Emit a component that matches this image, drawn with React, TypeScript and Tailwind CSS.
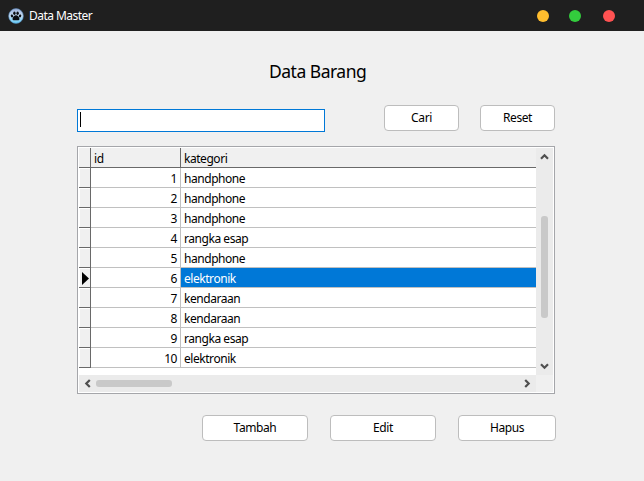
import React from "react";

const rows = [
  { id: 1, kategori: "handphone" },
  { id: 2, kategori: "handphone" },
  { id: 3, kategori: "handphone" },
  { id: 4, kategori: "rangka esap" },
  { id: 5, kategori: "handphone" },
  { id: 6, kategori: "elektronik" },
  { id: 7, kategori: "kendaraan" },
  { id: 8, kategori: "kendaraan" },
  { id: 9, kategori: "rangka esap" },
  { id: 10, kategori: "elektronik" },
];
const selectedId = 6;

function Button({ label, width }: { label: string; width: string }) {
  return (
    <button
      className={`${width} flex h-[26px] items-center justify-center rounded-[4px] border border-[#bdbdbd] bg-white text-[12px] leading-4 tracking-[-0.4px]`}
    >
      {label}
    </button>
  );
}

function Chevron({ rotate }: { rotate: string }) {
  return (
    <svg className={`${rotate} size-[9px] shrink-0`} viewBox="0 0 9 9" fill="none" stroke="#505050" strokeWidth="2.2">
      <path d="M1 6.800 4.500 3.300 8 6.800" />
    </svg>
  );
}

function PawLogo() {
  return (
    <svg className="size-4" viewBox="0 0 16 16">
      <defs>
        <linearGradient id="disc" x1="0" y1="0" x2="0" y2="1">
          <stop offset="0" stopColor="#9fb0d8" />
          <stop offset="0.5" stopColor="#c4dcf3" />
          <stop offset="1" stopColor="#62ccf8" />
        </linearGradient>
      </defs>
      <circle cx="8" cy="8" r="7.4" fill="url(#disc)" stroke="#4f7fae" strokeWidth="0.6" />
      <g fill="#0b0d12">
        <ellipse cx="4" cy="7.900" rx="1.2" ry="1.5" transform="rotate(-25 4 7.9)" />
        <ellipse cx="6.4" cy="5.2" rx="1.2" ry="1.7" />
        <ellipse cx="9.6" cy="5.2" rx="1.2" ry="1.7" />
        <ellipse cx="12" cy="7.9" rx="1.2" ry="1.5" transform="rotate(25 12 7.9)" />
        <path d="M8 7.300c1.700 0 3.500 2.200 3.500 3.600 0 1.600-2.200 1.400-3.500 1.400s-3.500.2-3.500-1.400C4.500 9.500 6.300 7.300 8 7.300z" />
      </g>
    </svg>
  );
}

function Grid() {
  return (
    <div className="mt-[14px] ml-[77px] flex h-[248px] w-[478px] flex-col border border-[#a5a6aa] bg-white p-px">
      <div className="flex h-[227px]">
        <div className="flex w-[457px] flex-col">
          <div className="flex h-5 border-b border-[#696969] bg-[#f0f0f0]">
            <div className="w-3 border-r border-[#696969]" />
            <div className="w-[90px] border-r border-[#696969] pl-[3px] leading-[21px]">id</div>
            <div className="flex-1 pl-[3px] leading-[21px]">kategori</div>
          </div>
          {rows.map((row) => (
            <div key={row.id} className="flex h-5">
              <div className="flex w-3 items-center border-r border-b border-[#696969] bg-[#f0f0f0] pt-px pl-[3px] shadow-[inset_1px_1px_0_#fff]">
                {row.id === selectedId && (
                  <svg className="h-[13px] w-[7px]" viewBox="0 0 7 13">
                    <path d="M0 0 7 6.500 0 13z" />
                  </svg>
                )}
              </div>
              <div className="w-[90px] border-r border-b border-[#c0c0c0] pr-[3px] text-right leading-[21px]">
                {row.id}
              </div>
              <div
                className={
                  row.id === selectedId
                    ? "flex-1 border-b border-[#c0c0c0] bg-[#0078d7] pl-[3px] leading-[21px] text-white"
                    : "flex-1 border-b border-[#c0c0c0] pl-[3px] leading-[21px]"
                }
              >
                {row.kategori}
              </div>
            </div>
          ))}
        </div>
        <div className="flex w-[17px] flex-col items-center bg-[#ebebeb] pt-[4px] pb-[4px]">
          <Chevron rotate="rotate-0" />
          <div className="mt-[55px] h-[102px] w-[7px] rounded-[3px] bg-[#c9c9c9]" />
          <div className="flex-1" />
          <Chevron rotate="rotate-180" />
        </div>
      </div>
      <div className="flex h-[17px]">
        <div className="flex w-[457px] items-center bg-[#ebebeb] pr-1 pl-1">
          <Chevron rotate="-rotate-90" />
          <div className="ml-1 h-[7px] w-[76px] rounded-[3px] bg-[#c9c9c9]" />
          <div className="flex-1" />
          <Chevron rotate="rotate-90" />
        </div>
        <div className="w-[17px] bg-[#f0f0f0]" />
      </div>
    </div>
  );
}

export default function App() {
  return (
    <div className="flex h-[481px] w-[644px] flex-col overflow-hidden bg-[#f0f0f0] font-['Noto_Sans',sans-serif] text-[12px] tracking-[-0.45px] text-black">
      <header className="flex h-[31px] items-center bg-[#1f1f1f] pr-[29px] pl-2 text-white">
        <PawLogo />
        <span className="ml-[5px] leading-4 tracking-[-0.55px]">Data Master</span>
        <div className="ml-auto flex">
          <span className="size-3 rounded-full bg-[#ffbd2e]" />
          <span className="ml-5 size-3 rounded-full bg-[#33cc3d]" />
          <span className="ml-[22px] size-3 rounded-full bg-[#ff5252]" />
        </div>
      </header>
      <h1 className="mt-[28px] ml-[269px] h-6 text-[17.5px] leading-6 tracking-[-0.5px] whitespace-nowrap">Data Barang</h1>
      <div className="mt-[22px] flex h-[27px] pl-[77px]">
        <div className="mt-1 h-[23px] w-[248px] border border-[#0078d7] bg-white pt-[2px] pl-[2px]">
          <div className="h-[15px] w-px bg-black" />
        </div>
        <div className="ml-[59px] flex gap-[21px]">
          <Button label="Cari" width="w-[75px]" />
          <Button label="Reset" width="w-[75px]" />
        </div>
      </div>
      <Grid />
      <div className="mt-[21px] ml-[202px] flex gap-[22px]">
        <Button label="Tambah" width="w-[106px]" />
        <Button label="Edit" width="w-[106px]" />
        <Button label="Hapus" width="w-[98px]" />
      </div>
    </div>
  );
}
